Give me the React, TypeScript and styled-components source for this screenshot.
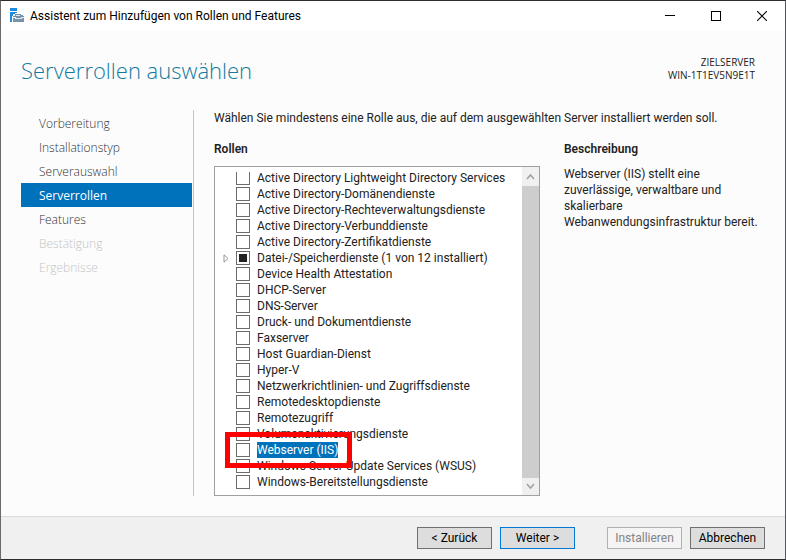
import React, { useState } from "react";
import styled, { createGlobalStyle } from "styled-components";

const GlobalStyle = createGlobalStyle`
  *, *::before, *::after { box-sizing: border-box; }
  body {
    margin: 0;
    background: #fcfcfc;
    color: #222;
    font: 12px/16px Roboto, "Open Sans", sans-serif;
  }
  button, input { font: inherit; margin: 0; }
  h1, h2, p, ul, ol { margin: 0; padding: 0; }
  ul, ol { list-style: none; }
`;

const Window = styled.div`
  display: flex;
  flex-direction: column;
  min-height: 100vh;
  border: 1px solid #2b2b30;
  border-left-color: #6a6a6c;
  border-right-color: #55565a;
`;

const TitleBar = styled.header`
  display: flex;
  align-items: center;
  height: 30px;
  padding-left: 8px;
  background: #fff;
  color: #000;
`;

const WindowTitle = styled.span`
  flex: 1;
  padding-left: 5px;
`;

const CaptionButton = styled.button`
  display: flex;
  align-items: center;
  justify-content: center;
  width: 46px;
  height: 30px;
  padding: 0;
  border: 0;
  background: transparent;
`;

const PageHeader = styled.div`
  display: flex;
  justify-content: space-between;
  height: 79px;
  padding: 23px 30px 0 20px;
`;

const Heading = styled.h1`
  font-family: "Open Sans", sans-serif;
  font-size: 22px;
  line-height: 32px;
  font-weight: 300;
  color: #137a9e;
`;

const Target = styled.div`
  font-family: "Open Sans", sans-serif;
  font-size: 10px;
  line-height: 13px;
  text-align: right;
  padding-top: 2px;
`;

const Body = styled.div`
  flex: 1;
  display: flex;
  padding: 0 20px 20px;
`;

const Steps = styled.nav`
  flex: none;
  width: 173px;
  padding: 1px 1px 0 0;
  border-right: 1px solid #c6c6c6;
`;

const Step = styled.button<{ $active?: boolean }>`
  display: block;
  width: 100%;
  height: 24px;
  padding: 2px 18px 0;
  border: 0;
  text-align: left;
  font-family: "Open Sans", sans-serif;
  font-size: 12px;
  line-height: 22px;
  background: ${(p) => (p.$active ? "#0072bc" : "transparent")};
  color: ${(p) => (p.$active ? "#fff" : "#333")};
  font-weight: ${(p) => (p.$active ? 400 : 350)};
  &:disabled { color: #c4c4c4; }
`;

const Main = styled.main`
  flex: 1;
  display: flex;
  flex-direction: column;
  padding-left: 20px;
`;

const Columns = styled.div`
  flex: 1;
  display: flex;
  gap: 24px;
  padding-top: 15px;
`;

const RolesColumn = styled.section`
  flex: 5;
  display: flex;
  flex-direction: column;
`;

const DescriptionColumn = styled.section`
  flex: 3;
  min-width: 201px;
`;

const SectionTitle = styled.h2`
  padding-bottom: 9px;
  font-size: 12px;
  line-height: 16px;
  font-weight: 600;
`;

const ListBox = styled.div`
  flex: 1;
  display: flex;
  border: 1px solid #a0a0a0;
  background: #fff;
`;

const Viewport = styled.div`
  flex: 1;
  margin: 5px 0 4px;
  overflow: hidden;
`;

const RoleList = styled.ul`
  margin-top: -2px;
`;

const RoleRow = styled.li`
  position: relative;
  display: flex;
  align-items: center;
  height: 16px;
  padding-left: 6px;
`;

const Expander = styled.button`
  display: flex;
  align-items: center;
  width: 15px;
  height: 16px;
  padding: 0 0 0 2px;
  border: 0;
  background: transparent;
`;

const Spacer = styled.span`
  width: 15px;
`;

const CheckBox = styled.input`
  appearance: none;
  width: 14px;
  height: 14px;
  border: 1px solid #6c6c6c;
  background: #fff;
  &:indeterminate, &:checked { background: #222; box-shadow: inset 0 0 0 2px #fff; }
`;

const RoleLabel = styled.label<{ $selected: boolean }>`
  margin-left: 7px;
  white-space: nowrap;
  background: ${(p) => (p.$selected ? "#0072bc" : "transparent")};
  color: ${(p) => (p.$selected ? "#fff" : "#222")};
`;

const Highlight = styled.span`
  position: absolute;
  left: 10px;
  top: -10px;
  width: 127px;
  height: 36px;
  border: 5px solid #fe0000;
  pointer-events: none;
  z-index: 1;
`;

const ScrollBar = styled.div`
  display: flex;
  flex-direction: column;
  width: 17px;
  background: #f0f0f0;
`;

const ScrollButton = styled.button<{ $height: number }>`
  display: flex;
  align-items: center;
  justify-content: center;
  height: ${(p) => p.$height}px;
  padding: 0;
  border: 0;
  background: #f0f0f0;
`;

const Thumb = styled.div`
  flex: 1;
  background: #cdcdcd;
`;

const Footer = styled.footer`
  display: flex;
  justify-content: flex-end;
  gap: 8px;
  height: 43px;
  padding: 10px 20px 0;
  border-top: 1px solid #dadada;
  background: #f0f0f0;
`;

const ButtonPair = styled.div`
  display: flex;
  gap: 8px;
  margin-right: 24px;
`;

const DialogButton = styled.button<{ $primary?: boolean }>`
  width: 75px;
  height: 22px;
  padding: 0;
  border: 1px solid ${(p) => (p.$primary ? "#0078d7" : "#707070")};
  background: #ddd;
  color: #000;
  line-height: 20px;
  white-space: nowrap;
  &:disabled { border-color: #adb2b5; background: #f4f4f4; color: #838383; }
`;

const steps = [
  { name: "Vorbereitung" },
  { name: "Installationstyp" },
  { name: "Serverauswahl" },
  { name: "Serverrollen", active: true },
  { name: "Features" },
  { name: "Bestätigung", disabled: true },
  { name: "Ergebnisse", disabled: true },
];

const roles = [
  "Active Directory Lightweight Directory Services",
  "Active Directory-Domänendienste",
  "Active Directory-Rechteverwaltungsdienste",
  "Active Directory-Verbunddienste",
  "Active Directory-Zertifikatdienste",
  "Datei-/Speicherdienste (1 von 12 installiert)",
  "Device Health Attestation",
  "DHCP-Server",
  "DNS-Server",
  "Druck- und Dokumentdienste",
  "Faxserver",
  "Host Guardian-Dienst",
  "Hyper-V",
  "Netzwerkrichtlinien- und Zugriffsdienste",
  "Remotedesktopdienste",
  "Remotezugriff",
  "Volumenaktivierungsdienste",
  "Webserver (IIS)",
  "Windows Server Update Services (WSUS)",
  "Windows-Bereitstellungsdienste",
];
const PARTIAL = 5;
const WEB_SERVER = 17;

const markPartial = (el: HTMLInputElement | null) => {
  if (el) el.indeterminate = true;
};

const AppIcon = () => (
  <svg width="16" height="16" viewBox="0 0 16 16" shapeRendering="crispEdges" aria-hidden="true">
    <path d="M1 0h7v3H1zM1 4h7v1H6v1H4v2H3v6H1z" fill="#1e8ae0" />
    <path d="M6 6h6v1h2v1h1v6H4V8h2z" fill="#7892a8" />
    <path d="M7 7h4v1H7zM4 9h3v1h5V9h3v1h-2v1H6v-1H4z" fill="#e3eaef" />
  </svg>
);

const Chevron = ({ down }: { down?: boolean }) => (
  <svg width="9" height="7" viewBox="0 0 9 7" aria-hidden="true">
    <path d={down ? "M1 1l3.5 4L8 1" : "M1 6l3.5-4L8 6"} fill="none" stroke="#a0a0a0" strokeWidth="1.5" />
  </svg>
);

export default function App() {
  const [selected, setSelected] = useState(WEB_SERVER);
  return (
    <>
      <GlobalStyle />
      <Window>
        <TitleBar>
          <AppIcon />
          <WindowTitle>Assistent zum Hinzufügen von Rollen und Features</WindowTitle>
          <CaptionButton aria-label="Minimieren">
            <svg width="10" height="10" shapeRendering="crispEdges"><path d="M0 4h10v1H0z" /></svg>
          </CaptionButton>
          <CaptionButton aria-label="Maximieren">
            <svg width="10" height="10" shapeRendering="crispEdges">
              <path d="M.5 .5h9v9h-9z" fill="none" stroke="#000" />
            </svg>
          </CaptionButton>
          <CaptionButton aria-label="Schließen">
            <svg width="10" height="10"><path d="M0 0l10 10M10 0L0 10" stroke="#000" strokeWidth="1.1" /></svg>
          </CaptionButton>
        </TitleBar>

        <PageHeader>
          <Heading>Serverrollen auswählen</Heading>
          <Target>
            <div>ZIELSERVER</div>
            <div>WIN-1T1EV5N9E1T</div>
          </Target>
        </PageHeader>

        <Body>
          <Steps>
            {steps.map((s) => (
              <Step key={s.name} $active={s.active} disabled={s.disabled}>{s.name}</Step>
            ))}
          </Steps>
          <Main>
            <p>Wählen Sie mindestens eine Rolle aus, die auf dem ausgewählten Server installiert werden soll.</p>
            <Columns>
              <RolesColumn>
                <SectionTitle>Rollen</SectionTitle>
                <ListBox>
                  <Viewport>
                    <RoleList>
                      {roles.map((role, i) => (
                        <RoleRow key={role} onClick={() => setSelected(i)}>
                          {i === PARTIAL ? (
                            <Expander aria-label="Erweitern">
                              <svg width="6" height="9"><path d="M1 .8v7.4L5 4.5z" fill="none" stroke="#959595" /></svg>
                            </Expander>
                          ) : (
                            <Spacer />
                          )}
                          <CheckBox type="checkbox" id={`role-${i}`} ref={i === PARTIAL ? markPartial : undefined} />
                          <RoleLabel htmlFor={`role-${i}`} $selected={selected === i}>{role}</RoleLabel>
                          {i === WEB_SERVER && <Highlight />}
                        </RoleRow>
                      ))}
                    </RoleList>
                  </Viewport>
                  <ScrollBar>
                    <ScrollButton $height={19} aria-label="Nach oben"><Chevron /></ScrollButton>
                    <Thumb />
                    <ScrollButton $height={17} aria-label="Nach unten"><Chevron down /></ScrollButton>
                  </ScrollBar>
                </ListBox>
              </RolesColumn>
              <DescriptionColumn>
                <SectionTitle>Beschreibung</SectionTitle>
                <p>Webserver (IIS) stellt eine zuverlässige, verwaltbare und skalierbare Webanwendungsinfrastruktur bereit.</p>
              </DescriptionColumn>
            </Columns>
          </Main>
        </Body>

        <Footer>
          <ButtonPair>
            <DialogButton>&lt; Zurück</DialogButton>
            <DialogButton $primary>Weiter &gt;</DialogButton>
          </ButtonPair>
          <DialogButton disabled>Installieren</DialogButton>
          <DialogButton>Abbrechen</DialogButton>
        </Footer>
      </Window>
    </>
  );
}
